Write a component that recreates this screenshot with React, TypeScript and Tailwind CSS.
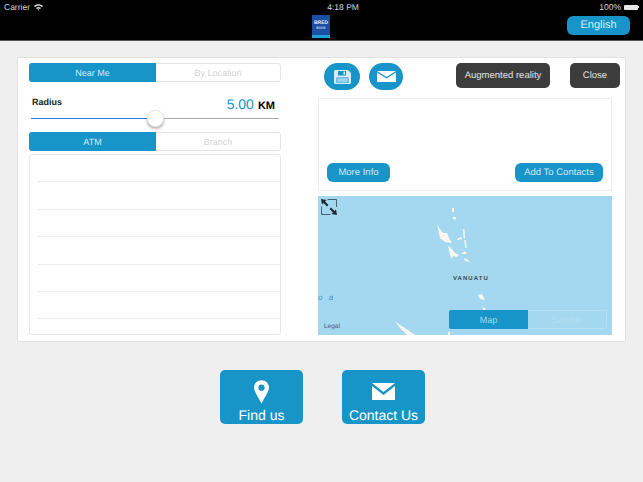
const blue = "bg-[#1795c8]";

function Segment(props: { left: string; right: string; className?: string }) {
    return (
        <div className={"flex h-[19px] w-[252px] rounded-[3px] border border-[#e4e4e4] bg-white text-[9px] leading-[18px] " + (props.className || "")}>
            <div className={"-m-px h-[19px] w-[127px] shrink-0 rounded-l-[3px] text-center leading-[20px] text-[#cfeaf6] " + blue}>{props.left}</div>
            <div className="ml-px flex-1 text-center text-[#d4d4d4]">{props.right}</div>
        </div>
    );
}

function ListRows() {
    const rows = [0, 1, 2, 3, 4, 5];
    return (
        <div className="mt-[3px] h-[181px] w-[252px] rounded-[3px] border border-[#e8e8e8] bg-white">
            {rows.map((row) => (
                <div key={row} className="ml-[8px] h-[27.4px] border-b border-[#ececec]" />
            ))}
        </div>
    );
}

function MapPane() {
    return (
        <div className="relative mt-[5px] h-[139px] w-[294px] overflow-hidden bg-[#a3d8f0]">
            <svg className="absolute left-0 top-0" width="294" height="139" viewBox="0 0 294 139" fill="#f8f6ef">
                <rect x="134" y="12" width="2" height="4" />
                <rect x="135" y="21" width="3" height="2.5" />
                <path d="M119 28 L122 33 L125 37 L129 37 L131 42 L134 47 L127 46 L122 42 Z" />
                <path d="M139 43 L143 41 L144 43 L140 44 Z" />
                <path d="M145 33 L146.5 33 L147 43 L145.5 42 Z" />
                <path d="M146 44 L147.5 44 L149 52 L147.5 52 Z" />
                <path d="M130 50 L133 52 L137 57 L141 59 L139 61 L135 60 L134 63 L132 59 Z" />
                <path d="M143 58 L147 55 L149 58 Z" />
                <path d="M146 62 L149 63 L152 66 L147 65 Z" />
                <path d="M160 99 L164 98 L167 104 L162 103 Z" />
                <path d="M165 111 L167 112 L168 115 L165 115 Z" />
                <path d="M77 125 L82 129 L90 134 L97 139 L89 139 L81 131 Z" />
                <rect x="130" y="136" width="2" height="3" />
            </svg>
            <svg className="absolute left-[3px] top-[3px]" width="16" height="16" viewBox="0 0 16 16" fill="none">
                <path d="M6.5 0.5 H15.5 V8" stroke="#33424a" strokeWidth="0.8" />
                <path d="M0.5 7.5 V15.5 H9.5" stroke="#33424a" strokeWidth="0.8" />
                <path d="M0 0 L5.5 1 L4 2.5 L7.5 6 L6 7.5 L2.5 4 L1 5.5 Z" fill="#20292e" />
                <path d="M16 16 L10.5 15 L12 13.5 L8.5 10 L10 8.5 L13.5 12 L15 10.5 Z" fill="#20292e" />
            </svg>
            <div className="absolute left-[135px] top-[79px] text-[6px] font-bold leading-[8px] tracking-[1.05px] text-[#3d4548]">VANUATU</div>
            <div className="absolute left-0 top-[97px] text-[8px] italic leading-[10px] tracking-[2px] text-[#3f93d4]">o a</div>
            <div className="absolute left-[6px] top-[127px] text-[6.5px] leading-[8px] text-[#4e5a60]">Legal</div>
            <div className="absolute left-[131px] top-[114px] flex h-[19px] w-[158px] rounded-[2px] border border-[#b4dff3] text-[9px] leading-[18px]">
                <div className={"-m-px h-[19px] w-[79px] shrink-0 rounded-l-[2px] text-center leading-[20px] text-[#a3d8f0] " + blue}>Map</div>
                <div className="ml-px flex-1 text-center text-[#b4dff3]">Satellite</div>
            </div>
        </div>
    );
}

function BigTile(props: { label: string; children: any }) {
    return (
        <div className={"flex h-[54px] w-[83px] flex-col items-center rounded-[5px] text-white " + blue}>
            <div className="mt-[9px] flex h-[25px] items-center">{props.children}</div>
            <div className="mt-[2px] text-[14px] leading-[18px]">{props.label}</div>
        </div>
    );
}

export default function App() {
    return (
        <div className="flex h-[482px] w-[643px] flex-col overflow-hidden bg-[#efefef] font-['Liberation_Sans',sans-serif] [text-rendering:geometricPrecision]">
            <div className="h-[41px] border-b border-[#555] bg-black text-white">
                <div className="flex h-[14px] items-center justify-between px-[4px] text-[8.5px] leading-[14px] text-[#d8d8d8]">
                    <div className="flex items-center gap-[4px]">
                        Carrier
                        <svg width="9" height="7" viewBox="0 0 9 7" fill="#d8d8d8">
                            <path d="M0 2.2 C2.5 -0.4 6.5 -0.4 9 2.2 L8 3.2 C6 1.2 3 1.2 1 3.2 Z" />
                            <path d="M2 4 C3.5 2.5 5.5 2.5 7 4 L6 5 C5 4.2 4 4.2 3 5 Z" />
                            <path d="M3.6 5.5 C4.2 5 4.8 5 5.4 5.5 L4.5 6.6 Z" />
                        </svg>
                    </div>
                    <div className="ml-[44px]">4:18 PM</div>
                    <div className="flex items-center gap-[3px]">
                        100%
                        <div className="h-[5px] w-[14px] rounded-[1px] bg-[#e8e8e8]" />
                        <div className="-ml-[3px] h-[2px] w-px bg-[#e8e8e8]" />
                    </div>
                </div>
                <div className="relative flex h-[26px] justify-center">
                    <div className="ml-[-1px] mt-[1px] flex h-[23px] w-[18px] flex-col items-center bg-[#1a4fa3] pt-[6px] text-[5px] font-bold leading-[5px] text-[#e6ecf6]">
                        <div>BRED</div>
                        <div className="text-[3.5px] font-normal leading-[4px]">BANK</div>
                        <div className="mt-auto h-[3px] w-full bg-[#1fa2dc]" />
                    </div>
                    <div className={"absolute left-[567px] top-[2px] h-[19px] w-[63px] rounded-[6px] text-center text-[11px] leading-[18px] text-[#d8f0fa] " + blue}>English</div>
                </div>
            </div>

            <div className="ml-[17px] mt-[16px] flex h-[285px] w-[609px] rounded-[3px] border border-[#e2e2e2] bg-white pl-[11px] pt-[5px]">
                <div className="w-[252px] shrink-0">
                    <Segment left="Near Me" right="By Location" />
                    <div className="flex h-[28px] items-start justify-between px-[3px] pt-[15px]">
                        <div className="text-[9px] font-bold leading-[11px] text-[#222]">Radius</div>
                        <div className="mr-[3px] flex items-baseline gap-[4px] text-[11px] font-bold leading-[15px] text-black">
                            <span className="text-[14px] font-normal text-[#1795c8]">5.00</span>KM
                        </div>
                    </div>
                    <div className="relative mx-[2px] mt-[8px] h-[1px] bg-[#aaaaaa]">
                        <div className="h-[1px] w-[124px] bg-[#2a7fd4]" />
                        <div className="absolute left-[116px] top-[-8px] h-[17px] w-[17px] rounded-full border border-[#e6e6e6] bg-white shadow-[0_2px_3px_rgba(0,0,0,0.3)]" />
                    </div>
                    <Segment className="mt-[13px]" left="ATM" right="Branch" />
                    <ListRows />
                </div>

                <div className="ml-[37px] w-[294px] shrink-0">
                    <div className="flex h-[35px] items-start">
                        <div className={"ml-[6px] flex h-[27px] w-[36px] shrink-0 items-center justify-center rounded-full " + blue}>
                            <svg width="17" height="14" viewBox="0 0 17 14" fill="#d4eef9">
                                <path d="M0 1.5 A1.5 1.5 0 0 1 1.5 0 H14 L17 3 V12.5 A1.5 1.5 0 0 1 15.5 14 H1.5 A1.5 1.5 0 0 1 0 12.5 Z" />
                                <rect x="4" y="1" width="8" height="4.5" fill="#1795c8" />
                                <rect x="9.5" y="1.6" width="1.5" height="3" fill="#d4eef9" />
                                <rect x="2.5" y="7.5" width="12" height="5.5" fill="#1795c8" />
                                <rect x="3.2" y="8.2" width="10.6" height="4.4" fill="#9ed5ec" />
                            </svg>
                        </div>
                        <div className={"ml-[9px] flex h-[27px] w-[34px] shrink-0 items-center justify-center rounded-full " + blue}>
                            <svg width="19" height="11" viewBox="0 0 19 11" fill="#fff">
                                <path d="M0 0 H19 L9.5 6 Z" />
                                <path d="M0 1.6 L9.5 7.6 L19 1.6 V11 H0 Z" />
                            </svg>
                        </div>
                        <div className="ml-[53px] h-[25px] w-[94px] shrink-0 rounded-[5px] bg-[#3c3c3c] text-center text-[9.5px] leading-[26px] text-[#e2e2e2]">Augmented reality</div>
                        <div className="ml-[20px] h-[25px] w-[50px] shrink-0 rounded-[5px] bg-[#3c3c3c] text-center text-[9.5px] leading-[26px] text-[#e2e2e2]">Close</div>
                    </div>
                    <div className="flex h-[93px] w-[294px] items-end justify-between rounded-[2px] border border-[#ececec] px-[8px] pb-[8px]">
                        <div className={"h-[19px] w-[63px] rounded-[6px] text-center text-[9.5px] leading-[20px] text-[#cfeaf6] " + blue}>More Info</div>
                        <div className={"h-[19px] w-[88px] rounded-[6px] text-center text-[9.5px] leading-[20px] text-[#cfeaf6] " + blue}>Add To Contacts</div>
                    </div>
                    <MapPane />
                </div>
            </div>

            <div className="ml-[220px] mt-[28px] flex gap-[39px]">
                <BigTile label="Find us">
                    <svg width="15" height="24" viewBox="0 0 16 25" fill="#fff">
                        <path fillRule="evenodd" d="M8 0 C12.6 0 16 3.4 16 7.8 C16 12 11 19 8 25 C5 19 0 12 0 7.8 C0 3.4 3.4 0 8 0 Z M8 4.6 A3.3 3.3 0 1 0 8 11.2 A3.3 3.3 0 1 0 8 4.6 Z" />
                    </svg>
                </BigTile>
                <BigTile label="Contact Us">
                    <svg width="23" height="17" viewBox="0 0 23 17" fill="#fff">
                        <path d="M0 0 H23 L11.5 9 Z" />
                        <path d="M0 3 L11.5 12 L23 3 V17 H0 Z" />
                    </svg>
                </BigTile>
            </div>
        </div>
    );
}
